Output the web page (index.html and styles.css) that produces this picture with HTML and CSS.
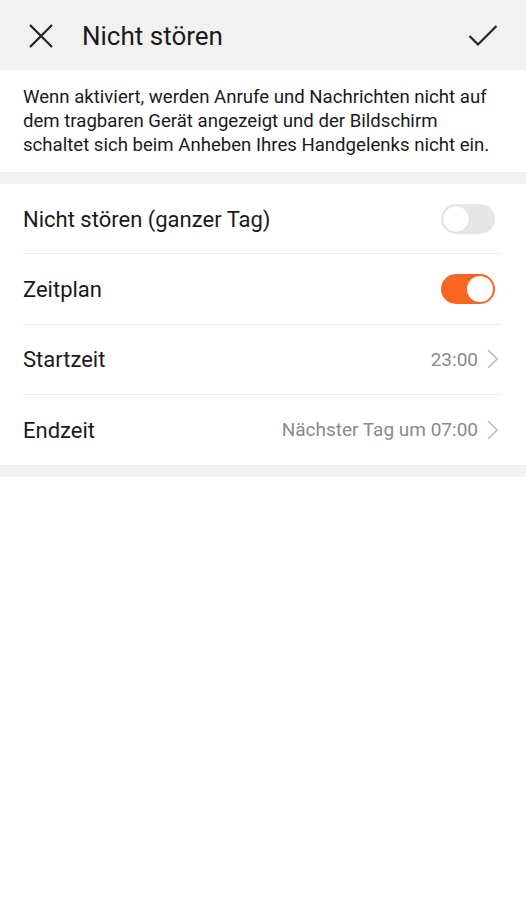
FILE: index.html
```html
<!DOCTYPE html>
<html lang="de">
<head>
<meta charset="utf-8">
<title>Nicht stören</title>
<link rel="stylesheet" href="styles.css">
</head>
<body>
<header class="topbar">
  <svg class="icon-close" width="26" height="26" viewBox="0 0 26 26"><path d="M2 2 L24 24 M24 2 L2 24" stroke="#222" stroke-width="2.2" fill="none"/></svg>
  <h1 class="title">Nicht stören</h1>
  <svg class="icon-check" width="30" height="24" viewBox="0 0 30 24"><path d="M1.5 12 L10 20.5 L28.5 2" stroke="#222" stroke-width="2.2" fill="none"/></svg>
</header>
<section class="desc">
  <p>Wenn aktiviert, werden Anrufe und Nachrichten nicht auf dem tragbaren Gerät angezeigt und der Bildschirm schaltet sich beim Anheben Ihres Handgelenks nicht ein.</p>
</section>
<div class="gap"></div>
<ul class="list">
  <li class="row">
    <span class="label">Nicht stören (ganzer Tag)</span>
    <span class="switch off"><span class="knob"></span></span>
  </li>
  <li class="row">
    <span class="label">Zeitplan</span>
    <span class="switch on"><span class="knob"></span></span>
  </li>
  <li class="row">
    <span class="label">Startzeit</span>
    <span class="value">23:00</span>
    <svg class="chev" width="11" height="20" viewBox="0 0 11 20"><path d="M1 1 L10 10 L1 19" stroke="#bdbdbd" stroke-width="1.6" fill="none"/></svg>
  </li>
  <li class="row">
    <span class="label">Endzeit</span>
    <span class="value">Nächster Tag um 07:00</span>
    <svg class="chev" width="11" height="20" viewBox="0 0 11 20"><path d="M1 1 L10 10 L1 19" stroke="#bdbdbd" stroke-width="1.6" fill="none"/></svg>
  </li>
</ul>
<div class="gap"></div>
</body>
</html>
```
FILE: styles.css
```css
* { box-sizing: border-box; }
html, body { margin: 0; padding: 0; background: #fff; }
body { font-family: Roboto, "Noto Sans", sans-serif; color: #1a1a1a; width: 526px; }

.topbar {
  height: 70px;
  background: #f1f1f1;
  display: flex;
  align-items: center;
  padding: 1px 28px 0 28px;
}
.icon-close { margin-right: 28px; }
.title { font-size: 26px; font-weight: 400; margin: 0; flex: 1; color: #1a1a1a; }

.desc { padding: 15px 20px 15px 23px; }
.desc p { margin: 0; font-size: 18.6px; line-height: 24px; color: #1a1a1a; }

.gap { height: 12px; background: #f1f1f1; }

.list { list-style: none; margin: 0; padding: 0 24px 0 23px; }
.row {
  height: 70.25px;
  display: flex;
  align-items: center;
  border-bottom: 1px solid #ebebeb;
}
.row:last-child { border-bottom: none; }
.label { flex: 1; font-size: 22px; color: #1a1a1a; padding-top: 1px; }
.value { font-size: 19px; color: #8a8a8a; margin-right: 9px; }
.chev { margin-right: 4px; }

.switch {
  width: 54px; height: 30px; border-radius: 15px;
  position: relative; margin-right: 7px;
}
.switch.off { background: #e6e6e6; }
.switch.on { background: #fb6522; }
.knob {
  position: absolute; top: 2px; width: 26px; height: 26px; border-radius: 50%;
  background: #fff;
}
.switch.off .knob { left: 2px; box-shadow: 0 0 1px rgba(0,0,0,0.25); }
.switch.on .knob { right: 2px; }
```
